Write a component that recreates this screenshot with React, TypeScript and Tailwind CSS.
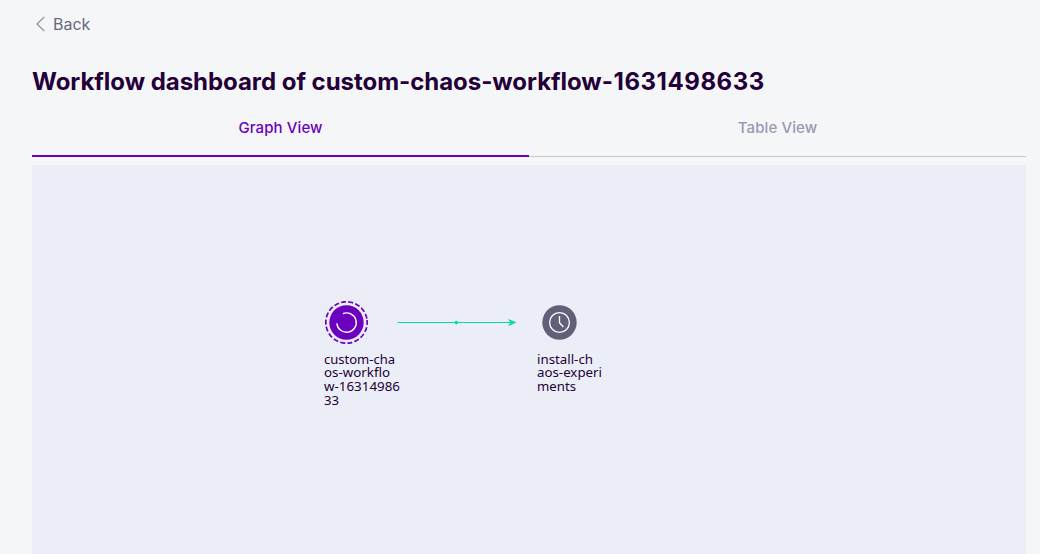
const label = "fill-[#230038] font-['Noto_Sans',sans-serif] text-[13.2px]";

type Line = { text: string; width: number };

function NodeLabel({ x, lines }: { x: number; lines: Line[] }) {
  return (
    <>
      {lines.map((l, i) => (
        <text key={i} x={x} y={Math.floor(199 + i * 13.7)} textLength={l.width} lengthAdjust="spacingAndGlyphs" className={label}>
          {l.text}
        </text>
      ))}
    </>
  );
}

function Graph() {
  return (
    <svg width="994" height="389" viewBox="0 0 994 389" className="block">
      <g fill="none">
        <circle cx="314.5" cy="157.5" r="20.7" stroke="#6c00bf" strokeWidth="1.7" strokeDasharray="5 2.225" transform="rotate(-6.9 314.5 157.5)" />
        <circle cx="314.5" cy="157.5" r="17.2" fill="#6c00bf" />
        <path d="M310.9 148.6A9.7 9.7 0 1 1 304.9 158.4" stroke="#fff" strokeWidth="1.4" />
      </g>
      <g stroke="#0adba2" fill="none">
        <path d="M365.5 157.5H481" strokeWidth="1.2" />
        <circle cx="424.3" cy="157.6" r="1.8" fill="#0adba2" stroke="none" />
        <path d="M476 153.8L484.5 157.5L476 161.2L478.4 157.5Z" fill="#0adba2" stroke="none" />
      </g>
      <g fill="none">
        <circle cx="527.5" cy="157.5" r="17.2" fill="#626078" />
        <circle cx="527.5" cy="157.5" r="9.9" stroke="#fff" strokeWidth="1.3" />
        <path d="M527.5 151V157.8L531.4 162" stroke="#fff" strokeWidth="1.3" />
      </g>
      <NodeLabel
        x={292}
        lines={[
          { text: "custom-cha", width: 71 },
          { text: "os-workflo", width: 66 },
          { text: "w-16314986", width: 76 },
          { text: "33", width: 15 },
        ]}
      />
      <NodeLabel
        x={505}
        lines={[
          { text: "install-ch", width: 56 },
          { text: "aos-experi", width: 65 },
          { text: "ments", width: 39 },
        ]}
      />
    </svg>
  );
}

export default function App() {
  return (
    <main className="h-[554px] w-[1040px] overflow-hidden bg-[#f5f6f8] pl-8 pr-3.5 font-['Inter',sans-serif]">
      <button className="mt-3 flex h-6 items-center pl-1 text-base text-[#696880]">
        <svg width="9" height="16" viewBox="0 0 9 16" fill="none" stroke="#858585" strokeWidth="1.1">
          <path d="M8.3 .8L1 8L8.3 15.2" />
        </svg>
        <span className="ml-2">Back</span>
      </button>
      <h1 className="mt-7 h-9 whitespace-nowrap text-2xl leading-9 font-bold tracking-[-0.04px] text-[#230038]">
        Workflow dashboard of custom-chaos-workflow<span className="tracking-[0.55px]">-1631498633</span>
      </h1>
      <div className="flex h-[57px] text-[15px] font-medium">
        <button className="w-[497px] border-b-2 border-[#6c00bf] leading-6 tracking-[0.1px] text-[#6c00bf]">Graph View</button>
        <button className="w-[497px] border-b border-[#c9c9cd] pb-px leading-6 tracking-[0.1px] text-[#9a98b2]">Table View</button>
      </div>
      <section className="mt-2 h-[389px] bg-[#ebeef7]">
        <Graph />
      </section>
    </main>
  );
}
